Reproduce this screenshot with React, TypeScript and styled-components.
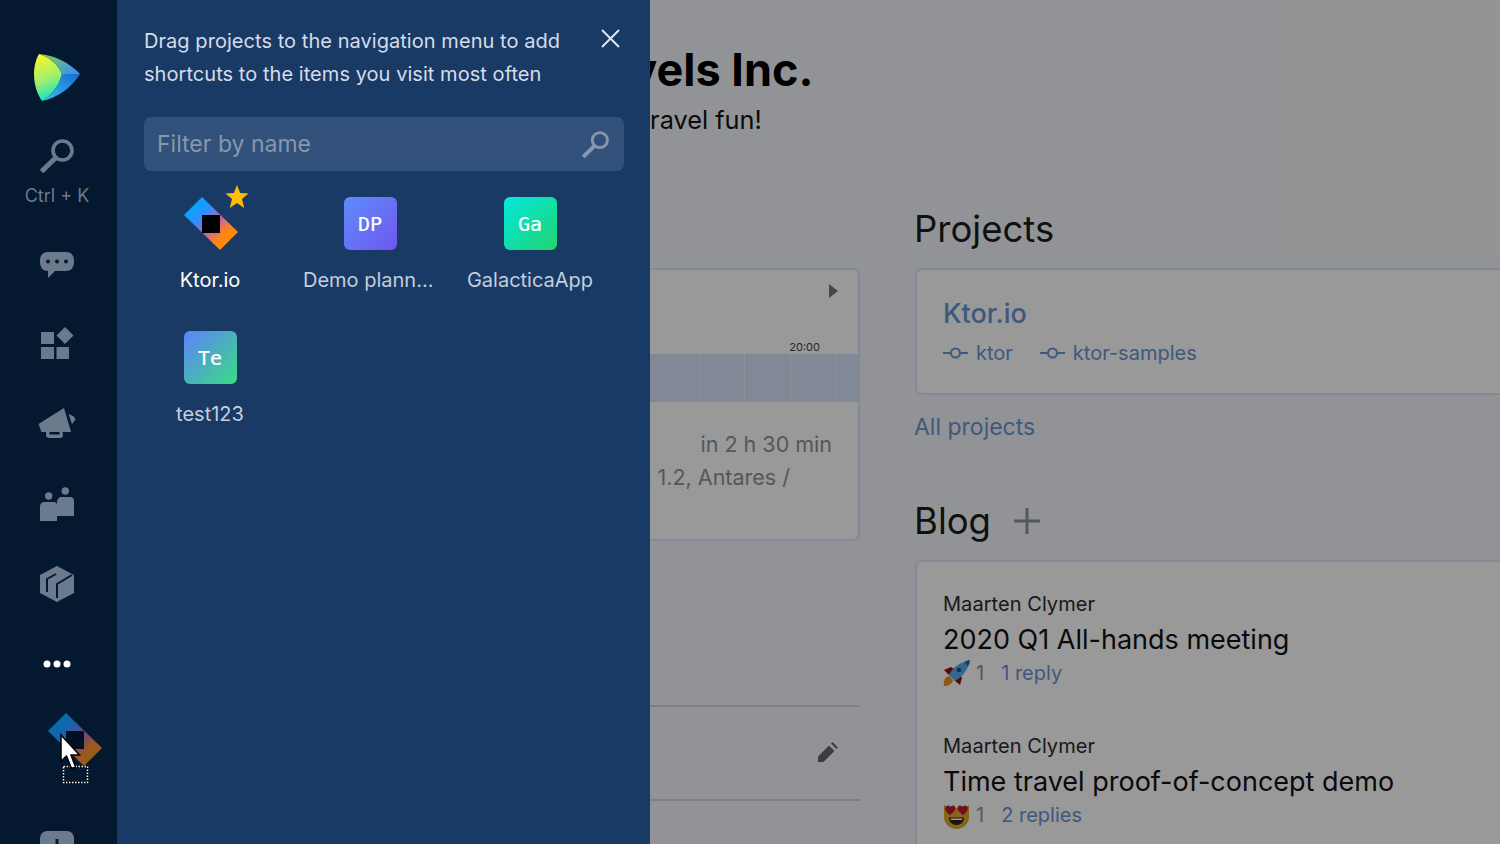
import React from 'react';
import styled, { createGlobalStyle } from 'styled-components';

const GlobalStyle = createGlobalStyle`
  html, body {
    margin: 0;
    height: 100%;
    overflow: hidden;
    font-family: Inter, "Noto Sans", sans-serif;
  }
  * { box-sizing: border-box; }
`;

const Page = styled.div`
  display: flex;
  width: 1500px;
  height: 844px;
  overflow: hidden;
  position: relative;
`;

/* left navigation rail */
const Rail = styled.nav`
  position: relative;
  flex: 0 0 117px;
  display: flex;
  flex-direction: column;
  align-items: center;
  background: #04182f;
  padding: 54px 3px 0 0;
  overflow: hidden;
`;

const LogoSlot = styled.div`
  flex: none;
  height: 85px;
  line-height: 0;
`;

const SearchSlot = styled.div`
  flex: none;
  display: flex;
  flex-direction: column;
  align-items: center;
  height: 85px;
  color: #6c7a8d;
  font-size: 18px;
  line-height: 22px;
`;

const SearchLabel = styled.span`
  margin-top: 12px;
`;

const RailItem = styled.div<{ $gap?: number }>`
  flex: none;
  display: flex;
  align-items: center;
  justify-content: center;
  height: 80px;
  width: 100%;
  margin-top: ${p => p.$gap ?? 0}px;
  line-height: 0;
`;

const Ghost = styled.div`
  position: absolute;
  left: 48px;
  top: 713px;
  line-height: 0;
`;

const Pointer = styled.svg`
  position: absolute;
  left: 56px;
  top: 730px;
`;

/* page dimmed behind the panel */
const Main = styled.main`
  position: relative;
  flex: 1;
  min-width: 0;
  background: #f4f6fa;
  padding-top: 42px;
  overflow: hidden;
`;

const Scrim = styled.div`
  position: absolute;
  inset: 0;
  background: rgba(0, 0, 0, 0.4);
`;

const Header = styled.header`
  padding-left: 322px;
  height: 120px;
`;

const Title = styled.h1`
  margin: 0;
  color: #000;
  font: 700 45px/56px Inter, sans-serif;
  white-space: nowrap;
`;

const Subtitle = styled.p`
  margin: 6px 0 0 3px;
  color: #111;
  font: 400 25.3px/32px Inter, sans-serif;
  white-space: nowrap;
`;

const Columns = styled.div`
  display: flex;
  gap: 55px;
  margin-top: 45px;
  padding-left: 83px;
`;

const LeftColumn = styled.section`
  flex: 0 0 660px;
`;

const RightColumn = styled.section`
  flex: 0 0 700px;
`;

const SectionHead = styled.div`
  display: flex;
  align-items: center;
  height: 44px;
  margin-bottom: 17px;
`;

const SectionTitle = styled.h2`
  margin: 0 0 0 -1px;
  color: #1c1c1c;
  font: 400 36.5px/44px Inter, sans-serif;
`;

const Card = styled.div<{ $pad?: string }>`
  background: #fff;
  border: 2px solid #dbe6f8;
  border-radius: 7px;
  padding: ${p => p.$pad ?? '0'};
`;

const ScheduleTop = styled.div`
  position: relative;
  height: 84px;
`;

const NextArrow = styled.span`
  position: absolute;
  right: 20px;
  top: 14px;
  border-left: 9px solid #777;
  border-top: 7px solid transparent;
  border-bottom: 7px solid transparent;
`;

const TimeLabel = styled.span`
  position: absolute;
  right: 38px;
  bottom: 0;
  color: #444;
  font-size: 11px;
  line-height: 13px;
`;

const Band = styled.div`
  display: flex;
  justify-content: flex-end;
  height: 48px;
  background: #d7e5fb;
`;

const BandCell = styled.span`
  flex: none;
  width: 45.4px;
  border-right: 1px solid #f2f4f7;

  &:last-child {
    width: 22px;
    border-right: 0;
  }
`;

const ScheduleBody = styled.div`
  padding: 26px 26px 45px 0;
  color: #8d9299;
  font-size: 21.5px;
  line-height: 33px;
  text-align: right;
  white-space: nowrap;
`;

const ScheduleLine = styled.div<{ $inset?: number }>`
  padding-right: ${p => p.$inset ?? 0}px;
`;

const EditRow = styled.div`
  display: flex;
  align-items: center;
  justify-content: flex-end;
  height: 96px;
  margin-top: 164px;
  padding: 0 22px 2px 0;
  border-top: 2px solid #d6d6d9;
  border-bottom: 2px solid #d6d6d9;
  line-height: 0;
`;

const ProjectName = styled.div`
  color: #6a94d0;
  font: 500 27px/36px Inter, sans-serif;
`;

const RepoRow = styled.div`
  display: flex;
  gap: 27px;
  margin-top: 7px;
`;

const Repo = styled.span`
  display: flex;
  align-items: center;
  gap: 8px;
  color: #6a94d0;
  font-size: 20px;
  line-height: 28px;
`;

const AllProjects = styled.a`
  display: block;
  margin: 17px 0 0 -1px;
  color: #6a94d0;
  font-size: 23px;
  line-height: 30px;
`;

const BlogSection = styled.div`
  margin-top: 57px;
`;

const PlusIcon = styled.svg`
  margin-left: 22px;
`;

const BlogPost = styled.article`
  margin-bottom: 47px;
`;

const Author = styled.div`
  color: #2b2b2b;
  font-size: 20px;
  line-height: 26px;
  letter-spacing: 0.05px;
`;

const PostTitle = styled.div`
  margin-top: 5px;
  color: #111;
  font-size: 27px;
  line-height: 36px;
`;

const Reactions = styled.div`
  display: flex;
  align-items: center;
  height: 26px;
  margin-top: 2px;
  font-size: 20px;
`;

const ReactionCount = styled.span`
  margin: 0 17px 0 6px;
  color: #8d9299;
`;

const Replies = styled.span`
  color: #6a94d0;
`;

/* shortcut panel on top of the dimmed page */
const Panel = styled.aside`
  position: absolute;
  left: 117px;
  top: 0;
  bottom: 0;
  width: 533px;
  padding: 25px 26px 0 27px;
  background: #1a3a66;
`;

const Hint = styled.p`
  margin: 0;
  width: 440px;
  color: #d5dde8;
  font-size: 20px;
  line-height: 33px;
  letter-spacing: 0.05px;
`;

const CloseButton = styled.button`
  position: absolute;
  top: 28px;
  left: 483px;
  padding: 0;
  border: 0;
  background: none;
  line-height: 0;
`;

const FilterBox = styled.div`
  display: flex;
  align-items: center;
  justify-content: space-between;
  height: 54px;
  margin-top: 26px;
  padding: 0 15px 0 13px;
  border-radius: 7px;
  background: #31507a;
  color: #8797ae;
  font-size: 23px;
`;

const ProjectGrid = styled.div`
  display: grid;
  grid-template-columns: repeat(3, 160px);
  grid-auto-rows: 134px;
  margin: 26px 0 0 -14px;
`;

const Shortcut = styled.div`
  position: relative;
  display: flex;
  flex-direction: column;
  align-items: center;
`;

const Tile = styled.div<{ $from: string; $to: string }>`
  display: flex;
  align-items: center;
  justify-content: center;
  width: 53px;
  height: 53px;
  border-radius: 6px;
  background: linear-gradient(135deg, ${p => p.$from}, ${p => p.$to});
  color: #fff;
  font: 400 20px/1 "DejaVu Sans Mono", monospace;
  -webkit-text-stroke: 0.2px #fff;
`;

const LogoTile = styled.div`
  width: 53px;
  height: 53px;
  line-height: 0;
`;

const StarBadge = styled.svg`
  position: absolute;
  left: 95px;
  top: -12px;
`;

const ShortcutLabel = styled.span<{ $active?: boolean }>`
  margin-top: 16px;
  max-width: 134px;
  overflow: hidden;
  color: ${p => (p.$active ? '#fff' : '#c3cede')};
  font-size: 20px;
  line-height: 28px;
  white-space: nowrap;
  text-overflow: ellipsis;
`;

const KtorLogo: React.FC<{ idSuffix: string; square: string; fade?: number }> = ({ idSuffix, square, fade = 1 }) => (
  <svg width="54" height="54" viewBox="0 0 54 54">
    <defs>
      <linearGradient id={`ktor-${idSuffix}`} x1="0.15" y1="0.15" x2="0.85" y2="0.85">
        <stop offset="0" stopColor="#00a8ff" />
        <stop offset="0.28" stopColor="#2f8fff" />
        <stop offset="0.55" stopColor="#c05fb0" />
        <stop offset="0.8" stopColor="#ff8418" />
        <stop offset="1" stopColor="#ff8a00" />
      </linearGradient>
    </defs>
    <polygon points="0,18 18,0 54,35 36,53" fill={`url(#ktor-${idSuffix})`} opacity={fade} />
    <rect x="18" y="18" width="18" height="18" fill={square} />
  </svg>
);

const AppLogo = () => (
  <svg width="47" height="47" viewBox="0 0 47 47">
    <defs>
      <linearGradient id="logo-left" x1="0.2" y1="0" x2="0.45" y2="1">
        <stop offset="0" stopColor="#fcf52c" />
        <stop offset="0.55" stopColor="#a4f06a" />
        <stop offset="1" stopColor="#0be5c6" />
      </linearGradient>
      <linearGradient id="logo-top" x1="0" y1="0" x2="1" y2="0.6">
        <stop offset="0" stopColor="#8bd23c" />
        <stop offset="1" stopColor="#3a97f0" />
      </linearGradient>
      <linearGradient id="logo-bottom" x1="1" y1="0" x2="0" y2="1">
        <stop offset="0" stopColor="#1669d3" />
        <stop offset="1" stopColor="#3cc4e6" />
      </linearGradient>
    </defs>
    <path d="M5 0C15 3 24 10 28 20C25 32 18 41 8 47C3 40 0 30 0 20C0 12 2 5 5 0Z" fill="url(#logo-left)" />
    <path d="M5 0C20 1 36 9 46 20L28 20C24 10 15 3 5 0Z" fill="url(#logo-top)" />
    <path d="M46 20C38 33 24 44 8 47C18 41 25 32 28 20Z" fill="url(#logo-bottom)" />
  </svg>
);

const SearchIcon: React.FC<{ size: number; color: string }> = ({ size, color }) => (
  <svg width={size} height={size} viewBox="0 0 34 34" fill="none" stroke={color}>
    <circle cx="22.5" cy="11.5" r="9.5" strokeWidth="3.6" />
    <path d="M15.5 19L1.5 32.5" strokeWidth="5" />
  </svg>
);

const ChatIcon = () => (
  <svg width="34" height="28" viewBox="40 250 34 28">
    <path d="M48 252H66C71 252 74 255 74 261C74 268 71 271 66 271H55L48 278V271C43 271 40 268 40 261C40 255 43 252 48 252Z" fill="#6c7a8d" />
    <circle cx="48" cy="261.5" r="2" fill="#04182f" />
    <circle cx="57" cy="261.5" r="2" fill="#04182f" />
    <circle cx="66" cy="261.5" r="2" fill="#04182f" />
  </svg>
);

const WidgetsIcon = () => (
  <svg width="34" height="34" viewBox="40 327 34 34" fill="#6c7a8d">
    <rect x="41" y="332" width="13" height="12" />
    <rect x="41" y="347" width="13" height="12" />
    <rect x="56.5" y="347" width="12.5" height="12" />
    <polygon points="65,327 73.5,335.5 65,344 56.5,335.5" />
  </svg>
);

const MegaphoneIcon = () => (
  <svg width="38" height="34" viewBox="38 408 38 34" fill="#6c7a8d">
    <path d="M38.5 425L64 409L71 433L41.5 433Z" />
    <path d="M68.5 415C72 416 75 418 75.5 420.5L72 425Z" />
    <path d="M46 433V436C46 438 47.5 439 49 439H60C62 439 63 438 63 436L62.5 433H59.5V435.5H49.5V433Z" />
  </svg>
);

const PeopleIcon = () => (
  <svg width="34" height="34" viewBox="40 487 34 34" fill="#6c7a8d">
    <circle cx="48.7" cy="496" r="3.7" />
    <circle cx="65.3" cy="491" r="3.7" />
    <path d="M60 497H70C72.5 497 74 498.5 74 501V516H57V502C57 500 58 498.5 60 497Z" />
    <path d="M44 502H55L57 504V521H40V506C40 504 42 502 44 502Z" />
  </svg>
);

const BoxIcon = () => (
  <svg width="34" height="36" viewBox="40 566 34 36">
    <polygon points="57,566 74,575 74,593 57,602 40,593 40,575" fill="#6c7a8d" />
    <path d="M57 598V584L72 575M56 574L47 579V592" fill="none" stroke="#04182f" strokeWidth="2" />
  </svg>
);

const DotsIcon = () => (
  <svg width="28" height="8" viewBox="0 0 28 8" fill="#fff">
    <circle cx="4" cy="4" r="3.5" />
    <circle cx="14" cy="4" r="3.5" />
    <circle cx="24" cy="4" r="3.5" />
  </svg>
);

const AddCircleIcon = () => (
  <svg width="34" height="34" viewBox="0 0 34 34">
    <rect width="34" height="34" rx="7" fill="#6c7a8d" />
    <path d="M17 8V26M8 17H26" stroke="#04182f" strokeWidth="3" />
  </svg>
);

const CursorIcon = () => (
  <Pointer width="36" height="56" viewBox="56 730 36 56">
    <rect x="63.5" y="766.5" width="24" height="16" fill="none" stroke="#000" strokeWidth="1.5" />
    <rect x="63.5" y="766.5" width="24" height="16" fill="none" stroke="#fff" strokeWidth="1.5" strokeDasharray="1.5 1.5" />
    <path d="M61 735V761L66.5 756L71.5 768.5L75.5 767L71 755H79.5Z" fill="#fff" stroke="#000" strokeWidth="1.5" />
  </Pointer>
);

const RepoIcon = () => (
  <svg width="25" height="12" viewBox="0 0 25 12" fill="none" stroke="#6a94d0" strokeWidth="2">
    <circle cx="12.5" cy="6" r="4.5" />
    <path d="M0 6H8M17 6H25" />
  </svg>
);

const RocketEmoji = () => (
  <svg width="27" height="26" viewBox="0 0 27 26">
    <path d="M1 26C0 21 2 17 6 16L10 20C9 24 6 26 1 26Z" fill="#f19020" />
    <path d="M1 10L8 7L11 9L6 15Z" fill="#a0041e" />
    <path d="M17 25L19 18L17 15L11 20Z" fill="#a0041e" />
    <path d="M6 15C9 8 17 2 27 0C26 9 19 17 12 21Z" fill="#55acee" />
    <path d="M27 0C26.6 2.5 26 4 25 6C23.5 4.5 22.5 3.5 21.5 2C23.5 1 25 .5 27 0Z" fill="#226699" />
    <circle cx="16" cy="10" r="2.3" fill="#1c4f7a" />
  </svg>
);

const CatEmoji = () => (
  <svg width="27" height="27" viewBox="0 0 27 27">
    <path d="M1 3L7 6H20L26 3L26 15C26 22 20 27 13.5 27C7 27 1 22 1 15Z" fill="#e0a82e" />
    <path d="M6 15.5H21C21 20 18 23 13.5 23C9 23 6 20 6 15.5Z" fill="#332211" />
    <path d="M7.5 16.5H19.5L19 18H8Z" fill="#fff" />
    <path d="M7 13C3 10 1 7 3 4.5C5 2.5 7 3.5 7.5 5C8 3.5 10.5 2.5 12 4.5C13.5 7 11 10 7 13Z" fill="#be1931" />
    <path d="M20 13C16 10 13.5 7 15 4.5C16.5 2.5 19 3.5 19.5 5C20 3.5 22 2.5 24 4.5C26 7 24 10 20 13Z" fill="#be1931" />
  </svg>
);

const App: React.FC = () => (
  <Page>
    <GlobalStyle />
    <Rail>
      <LogoSlot>
        <AppLogo />
      </LogoSlot>
      <SearchSlot>
        <SearchIcon size={34} color="#6c7a8d" />
        <SearchLabel>Ctrl + K</SearchLabel>
      </SearchSlot>
      <RailItem>
        <ChatIcon />
      </RailItem>
      <RailItem>
        <WidgetsIcon />
      </RailItem>
      <RailItem>
        <MegaphoneIcon />
      </RailItem>
      <RailItem>
        <PeopleIcon />
      </RailItem>
      <RailItem>
        <BoxIcon />
      </RailItem>
      <RailItem>
        <DotsIcon />
      </RailItem>
      <RailItem $gap={104}>
        <AddCircleIcon />
      </RailItem>
      <Ghost>
        <KtorLogo idSuffix="ghost" square="#03101f" fade={0.6} />
      </Ghost>
      <CursorIcon />
    </Rail>

    <Main>
      <Header>
        <Title>Time Travels Inc.</Title>
        <Subtitle>Making our time travel fun!</Subtitle>
      </Header>
      <Columns>
        <LeftColumn>
          <SectionHead>
            <SectionTitle>Meetings</SectionTitle>
          </SectionHead>
          <Card>
            <ScheduleTop>
              <NextArrow />
              <TimeLabel>20:00</TimeLabel>
            </ScheduleTop>
            <Band>
              <BandCell />
              <BandCell />
              <BandCell />
              <BandCell />
              <BandCell />
            </Band>
            <ScheduleBody>
              <ScheduleLine>in 2 h 30 min</ScheduleLine>
              <ScheduleLine $inset={42}>Meeting room 1.2, Antares /</ScheduleLine>
            </ScheduleBody>
          </Card>
          <EditRow>
            <svg width="20" height="20" viewBox="0 0 20 20" fill="#666">
              <path d="M0 20V14.5L11 3.5L16.5 9L5.5 20Z" />
              <path d="M13 1.5L14.5 0L20 5.5L18.5 7Z" />
            </svg>
          </EditRow>
        </LeftColumn>
        <RightColumn>
          <SectionHead>
            <SectionTitle>Projects</SectionTitle>
          </SectionHead>
          <Card $pad="26px 25px 26px 26px">
            <ProjectName>Ktor.io</ProjectName>
            <RepoRow>
              <Repo>
                <RepoIcon />
                ktor
              </Repo>
              <Repo>
                <RepoIcon />
                ktor-samples
              </Repo>
            </RepoRow>
          </Card>
          <AllProjects>All projects</AllProjects>
          <BlogSection>
            <SectionHead>
              <SectionTitle>Blog</SectionTitle>
              <PlusIcon width="28" height="28" viewBox="0 0 28 28" stroke="#8d9299" strokeWidth="3">
                <path d="M14 1V27M1 14H27" />
              </PlusIcon>
            </SectionHead>
            <Card $pad="29px 26px 0">
              <BlogPost>
                <Author>Maarten Clymer</Author>
                <PostTitle>2020 Q1 All-hands meeting</PostTitle>
                <Reactions>
                  <RocketEmoji />
                  <ReactionCount>1</ReactionCount>
                  <Replies>1 reply</Replies>
                </Reactions>
              </BlogPost>
              <BlogPost>
                <Author>Maarten Clymer</Author>
                <PostTitle>Time travel proof-of-concept demo</PostTitle>
                <Reactions>
                  <CatEmoji />
                  <ReactionCount>1</ReactionCount>
                  <Replies>2 replies</Replies>
                </Reactions>
              </BlogPost>
            </Card>
          </BlogSection>
        </RightColumn>
      </Columns>
      <Scrim />
    </Main>

    <Panel>
      <Hint>Drag projects to the navigation menu to add shortcuts to the items you visit most often</Hint>
      <CloseButton aria-label="Close">
        <svg width="21" height="21" viewBox="0 0 21 21" stroke="#dfe5ee" strokeWidth="2">
          <path d="M2 2L19 19M19 2L2 19" />
        </svg>
      </CloseButton>
      <FilterBox>
        Filter by name
        <SearchIcon size={27} color="#8797ae" />
      </FilterBox>
      <ProjectGrid>
        <Shortcut>
          <LogoTile>
            <KtorLogo idSuffix="tile" square="#000" />
          </LogoTile>
          <StarBadge width="24" height="24" viewBox="0 0 24 24">
            <polygon points="12,0 15.2,8 23.5,8.6 17,14 19.2,23 12,18 4.8,23 7,14 .5,8.6 8.8,8" fill="#ffbc00" />
          </StarBadge>
          <ShortcutLabel $active>Ktor.io</ShortcutLabel>
        </Shortcut>
        <Shortcut>
          <Tile $from="#5f8dfb" $to="#6d56f0">DP</Tile>
          <ShortcutLabel>Demo planning</ShortcutLabel>
        </Shortcut>
        <Shortcut>
          <Tile $from="#02e8df" $to="#21d46e">Ga</Tile>
          <ShortcutLabel>GalacticaApp</ShortcutLabel>
        </Shortcut>
        <Shortcut>
          <Tile $from="#5b82fa" $to="#3bdc84">Te</Tile>
          <ShortcutLabel>test123</ShortcutLabel>
        </Shortcut>
      </ProjectGrid>
    </Panel>
  </Page>
);

export default App;
